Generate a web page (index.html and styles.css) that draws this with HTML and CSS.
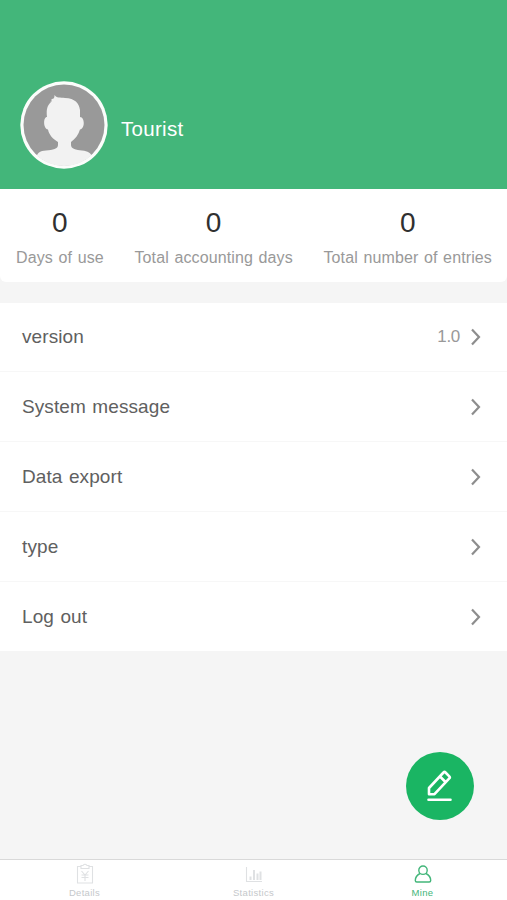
FILE: index.html
```html
<!DOCTYPE html>
<html lang="en">
<head>
<meta charset="utf-8">
<title>Mine</title>
<link rel="stylesheet" href="styles.css">
</head>
<body>
<header class="profile">
  <svg class="avatar" viewBox="0 0 88 88">
    <defs><clipPath id="face"><circle cx="44" cy="44" r="41"/></clipPath></defs>
    <circle cx="44" cy="44" r="43.7" fill="#fbfdfb"/>
    <circle cx="44" cy="44" r="40.5" fill="#999"/>
    <path clip-path="url(#face)" fill="#f2f2f2" d="M34.500 14C36.500 17 40 16.500 45 17C55 17.500 59 22 60 29V36C65 36 65 48 60 48.500C58.500 54 55 58 51 61V64C51 68 56 69 62 69.500C68 70 71 72 72 76V88H16V76C18 71.500 20 70 26 69.500C33 69 38 68 38 64V61C33 58 29 54 28 48.500C23 48 23 36 27 36C26 29 27.500 23 32 20.500L30 20.300C32 19.500 32.500 19 31 18C34 18.300 34.500 17 34.500 14Z"/>
  </svg>
  <span class="name">Tourist</span>
</header>
<section class="stats">
  <div class="stat"><b>0</b><span>Days of use</span></div>
  <div class="stat"><b>0</b><span>Total accounting days</span></div>
  <div class="stat"><b>0</b><span>Total number of entries</span></div>
</section>
<main class="menu">
  <div class="row"><span>version</span><em>1.0</em><svg class="arrow" viewBox="0 0 10 18"><path d="M1 1.500L8 9L1 16.500"/></svg></div>
  <div class="row"><span>System message</span><svg class="arrow" viewBox="0 0 10 18"><path d="M1 1.500L8 9L1 16.500"/></svg></div>
  <div class="row"><span>Data export</span><svg class="arrow" viewBox="0 0 10 18"><path d="M1 1.500L8 9L1 16.500"/></svg></div>
  <div class="row"><span>type</span><svg class="arrow" viewBox="0 0 10 18"><path d="M1 1.500L8 9L1 16.500"/></svg></div>
  <div class="row"><span>Log out</span><svg class="arrow" viewBox="0 0 10 18"><path d="M1 1.500L8 9L1 16.500"/></svg></div>
</main>
<div class="fab">
  <svg viewBox="0 0 30 34"><path d="M4 25.200V19L18.500 3.500Q19.500 2.500 20.500 3.500L24.300 7.300Q25.300 8.300 24.300 9.300L9.500 25.200ZM15 7.500L20.500 13M3.500 30.700H25.500"/></svg>
</div>
<nav class="tabs">
  <div class="tab">
    <svg viewBox="0 0 20 22"><path d="M6 3.500H2.500V20H17.500V3.500H14M6 2.500H8Q10 0 12 2.500H14V5.500H6ZM6.500 8L10 12L13.500 8M6.500 12H13.500M6.500 14.500H13.500M10 12V18"/></svg>
    <span>Details</span>
  </div>
  <div class="tab">
    <svg viewBox="0 0 20 22"><path d="M2.500 4V18.500H18"/><path class="bars" d="M6.500 17V13.500M10 17V7M13.500 17V10.500M16.500 17V8.500"/></svg>
    <span>Statistics</span>
  </div>
  <div class="tab active">
    <svg viewBox="0 0 20 22"><circle cx="10" cy="7.200" r="4.200"/><path d="M7 10.500C4 12 2.300 14.500 2.300 17.500Q2.300 19 3.800 19H16.200Q17.700 19 17.700 17.500C17.700 14.500 16 12 13 10.500"/></svg>
    <span>Mine</span>
  </div>
</nav>
</body>
</html>
```
FILE: styles.css
```css
* { box-sizing: border-box; }
body {
  margin: 0;
  height: 900px;
  display: flex;
  flex-direction: column;
  overflow: hidden;
  background: #f5f5f5;
  font-family: "Liberation Sans", Arial, sans-serif;
}
svg { fill: none; display: block; }
.profile {
  height: 189px;
  padding: 81px 20px 0;
  display: flex;
  align-items: flex-start;
  background: #43b67a;
}
.avatar { width: 88px; height: 88px; }
.name {
  margin: 36px 0 0 13px;
  font-size: 20.5px;
  line-height: 24px;
  letter-spacing: .3px;
  color: #fff;
}
.stats {
  height: 93px;
  padding: 18px 15px 0 16px;
  display: flex;
  justify-content: space-between;
  background: #fff;
  border-radius: 0 0 6px 6px;
}
.stat { display: flex; flex-direction: column; align-items: center; }
.stat b { font-size: 28px; line-height: 32px; font-weight: 400; color: #303030; }
.stat span {
  margin-top: 9px;
  font-size: 16px;
  line-height: 20px;
  letter-spacing: .12px;
  word-spacing: 1px;
  white-space: nowrap;
  color: #999;
}
.menu { margin-top: 21px; background: #fff; }
.row {
  height: 70px;
  padding: 0 26px 0 22px;
  display: flex;
  align-items: center;
  border-bottom: 1px solid #f7f7f7;
  font-size: 19px;
  letter-spacing: .1px;
  word-spacing: 1px;
  color: #606060;
}
.row:first-child { height: 69px; }
.row:last-child { height: 69px; border: 0; }
.row span { flex: 1; }
.row em { margin-right: 11px; font-size: 17px; font-style: normal; letter-spacing: -.3px; color: #999; }
.arrow { width: 10px; height: 18px; stroke: #8d8d8d; stroke-width: 2.2; }
.fab {
  position: absolute;
  left: 406px;
  top: 752px;
  width: 68px;
  height: 68px;
  display: flex;
  align-items: center;
  justify-content: center;
  border-radius: 50%;
  background: #1ab563;
}
.fab svg {
  width: 30px;
  height: 34px;
  stroke: #fff;
  stroke-width: 2.6;
  stroke-linejoin: round;
  stroke-linecap: round;
}
.tabs {
  height: 41px;
  margin-top: auto;
  display: flex;
  background: #fff;
  border-top: 1px solid #d9d9d9;
}
.tab {
  flex: 1;
  padding-top: 3px;
  display: flex;
  flex-direction: column;
  align-items: center;
  color: #c5c8cb;
  font-size: 9.5px;
  line-height: 12px;
  letter-spacing: .3px;
}
.tab svg { width: 20px; height: 22px; margin-bottom: 2px; stroke: #dfe1e3; stroke-width: 1.1; }
.tab .bars { stroke-width: 2; }
.tab.active { color: #43b67a; }
.tab.active svg { stroke: #43b67a; stroke-width: 1.4; }
```
